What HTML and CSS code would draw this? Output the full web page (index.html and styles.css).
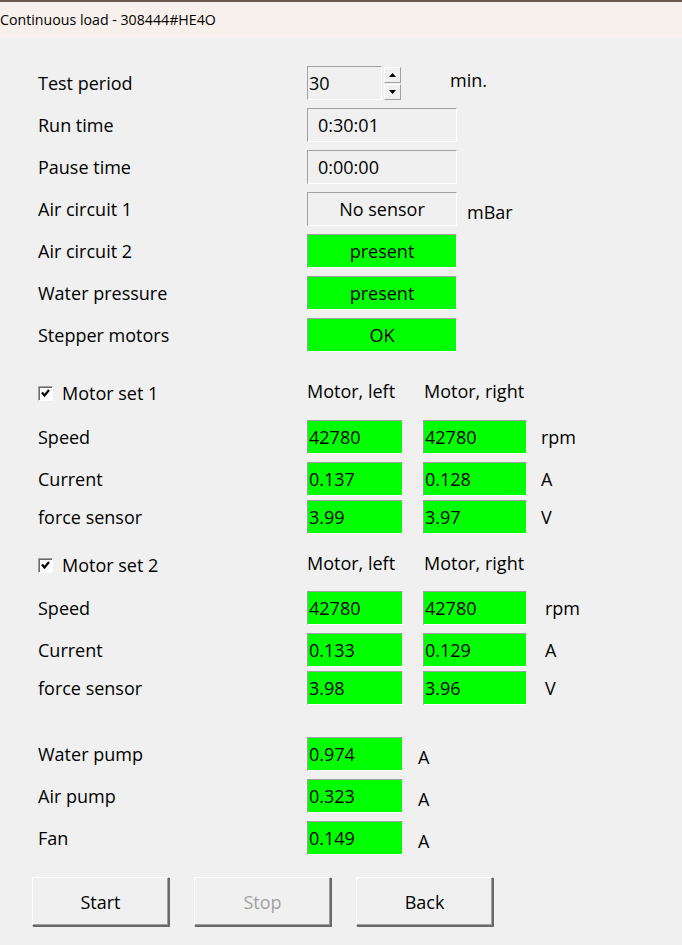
FILE: index.html
```html
<!DOCTYPE html>
<html lang="en">
<head>
  <meta charset="UTF-8" />
  <title>Continuous load - 308444#HE4O</title>
  <link rel="stylesheet" href="styles.css">
</head>
<body>
  <div class="titlebar">Continuous load - 308444#HE4O</div>
  <div class="form">
    <div class="row">
      <span class="label">Test period</span>
      <input class="field spin-input" type="text" value="30" />
      <div class="spinner">
        <button class="spin-btn"><svg width="7" height="4" viewBox="0 0 7 4"><path d="M3.5 0L7 4H0z" fill="#000"/></svg></button>
        <button class="spin-btn"><svg width="7" height="4" viewBox="0 0 7 4"><path d="M0 0h7L3.5 4z" fill="#000"/></svg></button>
      </div>
      <span class="unit unit-min">min.</span>
    </div>
    <div class="row">
      <span class="label">Run time</span>
      <div class="field wide gray">0:30:01</div>
    </div>
    <div class="row">
      <span class="label">Pause time</span>
      <div class="field wide gray">0:00:00</div>
    </div>
    <div class="row">
      <span class="label">Air circuit 1</span>
      <div class="field wide gray center">No sensor</div>
      <span class="unit unit-mbar">mBar</span>
    </div>
    <div class="row">
      <span class="label">Air circuit 2</span>
      <div class="field wide ok center">present</div>
    </div>
    <div class="row">
      <span class="label">Water pressure</span>
      <div class="field wide ok center">present</div>
    </div>
    <div class="row">
      <span class="label">Stepper motors</span>
      <div class="field wide ok center">OK</div>
    </div>

    <div class="motor-set first">
      <div class="set-head">
        <label class="label check"><span class="box"><svg width="9" height="8" viewBox="0 0 9 8"><path d="M1 3.5L3.5 6.5L8 1" fill="none" stroke="#000" stroke-width="2.2"/></svg></span>Motor set 1</label>
        <span class="col-head left">Motor, left</span>
        <span class="col-head">Motor, right</span>
      </div>
      <div class="row">
        <span class="label">Speed</span>
        <div class="field small ok">42780</div>
        <div class="field medium ok">42780</div>
        <span class="unit">rpm</span>
      </div>
      <div class="row">
        <span class="label">Current</span>
        <div class="field small ok">0.137</div>
        <div class="field medium ok">0.128</div>
        <span class="unit">A</span>
      </div>
      <div class="row tight">
        <span class="label">force sensor</span>
        <div class="field small ok">3.99</div>
        <div class="field medium ok">3.97</div>
        <span class="unit">V</span>
      </div>
    </div>

    <div class="motor-set second">
      <div class="set-head">
        <label class="label check"><span class="box"><svg width="9" height="8" viewBox="0 0 9 8"><path d="M1 3.5L3.5 6.5L8 1" fill="none" stroke="#000" stroke-width="2.2"/></svg></span>Motor set 2</label>
        <span class="col-head left">Motor, left</span>
        <span class="col-head">Motor, right</span>
      </div>
      <div class="row">
        <span class="label">Speed</span>
        <div class="field small ok">42780</div>
        <div class="field medium ok">42780</div>
        <span class="unit">rpm</span>
      </div>
      <div class="row">
        <span class="label">Current</span>
        <div class="field small ok">0.133</div>
        <div class="field medium ok">0.129</div>
        <span class="unit">A</span>
      </div>
      <div class="row tight">
        <span class="label">force sensor</span>
        <div class="field small ok">3.98</div>
        <div class="field medium ok">3.96</div>
        <span class="unit">V</span>
      </div>
    </div>

    <div class="pumps">
      <div class="row">
        <span class="label">Water pump</span>
        <div class="field small ok">0.974</div>
        <span class="unit low">A</span>
      </div>
      <div class="row">
        <span class="label">Air pump</span>
        <div class="field small ok">0.323</div>
        <span class="unit low">A</span>
      </div>
      <div class="row">
        <span class="label">Fan</span>
        <div class="field small ok">0.149</div>
        <span class="unit low">A</span>
      </div>
    </div>

    <div class="buttons">
      <button class="btn">Start</button>
      <button class="btn" disabled>Stop</button>
      <button class="btn">Back</button>
    </div>
  </div>
</body>
</html>
```

FILE: styles.css
```css
body {
  margin: 0;
  background: #f0f0f0;
  font-family: "Open Sans", "Noto Sans", sans-serif;
  font-size: 18px;
  color: #000;
  width: 682px;
  height: 945px;
  overflow: hidden;
}
.titlebar {
  height: 38px;
  line-height: 36px;
  background: #f8f0ec;
  border-top: 2px solid #6b5a52;
  box-sizing: border-box;
  font-size: 14.2px;
}
.form {
  padding: 28px 0 0 38px;
}
.row {
  display: flex;
  align-items: center;
  height: 34px;
  margin-bottom: 8px;
}
.row.tight {
  margin-bottom: 0;
  margin-top: -4px;
}
.label {
  width: 269px;
  flex-shrink: 0;
}
.field {
  display: flex;
  align-items: center;
  height: 34px;
  box-sizing: border-box;
  border: 1px solid;
  border-color: #a0a0a0 #fff #fff #a0a0a0;
  font: inherit;
  padding: 0 0 0 1px;
}
.spin-input {
  width: 75px;
  background: #f0f0f0;
  outline: none;
}
.spinner {
  display: flex;
  flex-direction: column;
  gap: 1px;
  margin-left: 2px;
  margin-top: 1px;
}
.spin-btn {
  display: flex;
  align-items: center;
  justify-content: center;
  width: 17px;
  height: 16px;
  padding: 0;
  border: 1px solid;
  border-color: #fff #a0a0a0 #a0a0a0 #fff;
  background: #f0f0f0;
}
.wide {
  width: 150px;
}
.gray {
  background: #f0f0f0;
  padding-left: 10px;
}
.center {
  justify-content: center;
  padding-left: 0;
}
.ok {
  background: #00ff00;
}
.small {
  width: 96px;
}
.medium {
  width: 104px;
  margin-left: 20px;
}
.unit {
  margin-left: 14px;
}
.unit-min {
  margin-left: 49px;
  margin-top: -6px;
}
.unit-mbar {
  margin-left: 10px;
  margin-top: 6px;
}
.second .unit {
  margin-left: 18px;
}
.unit.low {
  margin-left: 15px;
  margin-top: 6px;
}
.set-head {
  display: flex;
  align-items: center;
  height: 24px;
  margin-bottom: 17px;
}
.first {
  margin-top: 27px;
}
.second {
  margin-top: 17px;
}
.second .set-head {
  margin-bottom: 16px;
}
.check {
  display: flex;
  align-items: center;
  padding-top: 4px;
}
.box {
  display: flex;
  align-items: center;
  justify-content: center;
  width: 13px;
  height: 13px;
  border: 1px solid;
  border-color: #a0a0a0 #fff #fff #a0a0a0;
  background: #fff;
  margin-right: 9px;
  box-shadow: inset 1px 1px 0 #696969;
}
.col-head.left {
  width: 117px;
}
.pumps {
  margin-top: 32px;
}
.buttons {
  display: flex;
  gap: 25px;
  margin-left: -6px;
  margin-top: 22px;
}
.btn {
  width: 137px;
  height: 49px;
  font: inherit;
  background: #f0f0f0;
  border: 1px solid;
  border-color: #fff #696969 #696969 #fff;
  box-shadow: 1px 1px 0 #696969, inset -1px -1px 0 #a0a0a0;
  color: #000;
  padding: 0;
}
.btn:disabled {
  color: #a0a0a0;
}
```
